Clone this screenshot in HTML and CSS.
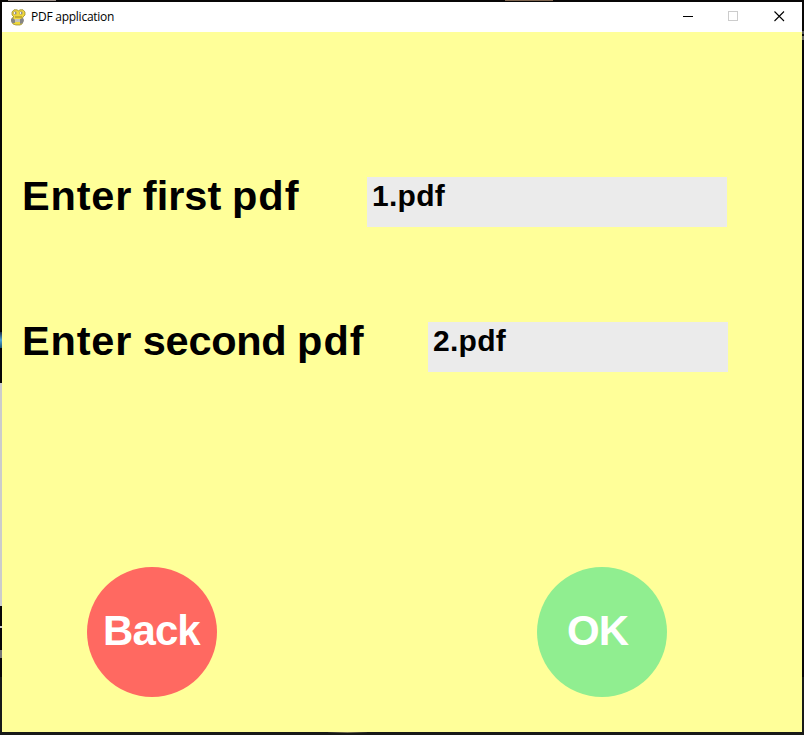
FILE: index.html
```html
<!DOCTYPE html>
<html lang="en">
<head>
<meta charset="utf-8">
<title>PDF application</title>
<link rel="stylesheet" href="styles.css">
</head>
<body>
<div class="desktop">
  <i class="sliver top-a"></i><i class="sliver top-b"></i>
  <i class="sliver blue"></i><i class="sliver pale"></i><i class="sliver dash"></i><i class="sliver gray"></i>
  <i class="sliver mark-a"></i><i class="sliver mark-b"></i><i class="sliver glow"></i>
  <main class="window">
    <header class="titlebar">
      <svg class="logo" width="16" height="17" viewBox="0 0 16 17">
        <path d="M4 .8h3l1.500 1 1.500-1h3L15 3v3l-2 2-1 2 1 2-1 3-2 1H6l-3-1-1-2V9l2-1-2-2V3z" fill="#efd83c" stroke="#8f8024" stroke-width=".7"/>
        <path d="M1 10l2-1 2 2v3H2l-1-2zM10 10l3-1 1 2-1 3-3 1z" fill="#858585"/>
        <path d="M5 10h5v3H5z" fill="#c4c4bb"/>
        <circle cx="5" cy="4" r="1.700" fill="#eee" stroke="#a58c20" stroke-width=".5"/>
        <circle cx="11" cy="4" r="1.700" fill="#eee" stroke="#a58c20" stroke-width=".5"/>
        <path d="M5 3.500h1v1H5zM11 3.500h1v1h-1z" fill="#333"/>
        <path d="M5 8h7" stroke="#84701c" stroke-width=".8"/>
      </svg>
      <span class="title">PDF application</span>
      <svg class="controls" width="120" height="30" viewBox="0 0 120 30" shape-rendering="crispEdges">
        <path d="M1 14h10v1H1z" fill="#000"/>
        <path d="M46.500 9.500h9v9h-9z" fill="none" stroke="#ccc"/>
        <path d="M92.500 9.500l9.500 9.500M102 9.500l-9.500 9.500" fill="none" stroke="#000" stroke-width="1.100" shape-rendering="auto"/>
      </svg>
    </header>
    <section class="canvas">
      <div class="row first">
        <label class="label"><span class="enter">Enter</span> <span class="mid-first">first</span> <span class="pdf">pdf</span></label>
        <div class="field">1.pdf</div>
      </div>
      <div class="row second">
        <label class="label"><span class="enter">Enter</span> <span class="mid-second">second</span> <span class="pdf">pdf</span></label>
        <div class="field">2.pdf</div>
      </div>
      <div class="actions">
        <button class="round back">Back</button>
        <button class="round ok">OK</button>
      </div>
    </section>
  </main>
</div>
</body>
</html>
```
FILE: styles.css
```css
* { box-sizing: border-box; }
body { margin: 0; background: #060505; }
.desktop { position: relative; width: 804px; height: 735px; padding: 2px; overflow: hidden;
  background: linear-gradient(#080606 0 677px, #181a18 677px); }
.window { position: relative; width: 800px; height: 730px; background: #ffff99; }
.titlebar { display: flex; align-items: center; height: 30px; padding-left: 8px; background: #fff; }
.logo { flex: none; }
.title { margin-left: 5px; font: 12px/30px "Open Sans", "Noto Sans", sans-serif; letter-spacing: -.25px; color: #000; white-space: nowrap; }
.controls { margin-left: auto; }
.canvas { height: 700px; padding-top: 145px; background: #ffff99; font-family: "Liberation Sans", Arial, sans-serif; font-weight: 700; font-kerning: none; font-variant-ligatures: none; }
.row { display: flex; justify-content: space-between; height: 50px; padding: 0 75px 0 20px; color: #000; }
.second { margin-top: 95px; padding-right: 74px; }
.label { font-size: 41.5px; line-height: 38px; white-space: nowrap; word-spacing: -.8px; }
.enter { letter-spacing: .8px; }
.mid-first { letter-spacing: 0; }
.mid-second { letter-spacing: -.3px; }
.pdf { letter-spacing: 1px; }
.field { width: 360px; padding-left: 5px; background: #ebebeb; font-size: 30px; line-height: 38px; letter-spacing: .3px; }
.second .field { width: 300px; }
.actions { display: flex; justify-content: space-between; margin-top: 195px; padding: 0 135px 0 85px; }
.round { width: 130px; height: 130px; padding: 0 0 3px; border: 0; border-radius: 50%; color: #fff; font: inherit; font-size: 42px; line-height: 127px; text-align: left; }
.back { padding-left: 16px; background: #ff6961; letter-spacing: -.9px; }
.ok { padding-left: 30px; background: #90ee90; letter-spacing: -1px; }
.sliver { position: absolute; }
.top-a { left: 8px; top: 0; width: 48px; height: 1px; background: #9b8e87; }
.top-b { left: 505px; top: 0; width: 48px; height: 1px; background: #806650; }
.blue { left: 0; top: 332px; width: 2px; height: 16px; background: linear-gradient(#1a2940, #4fa6d8, #1a5270); }
.pale { left: 0; top: 383px; width: 2px; height: 223px; background: #ccc; }
.dash { left: 0; top: 626px; width: 2px; height: 2px; background: #ccc; }
.gray { left: 0; top: 650px; width: 2px; height: 8px; background: #777; }
.mark-a { right: 0; top: 31px; width: 2px; height: 3px; background: #555; }
.mark-b { right: 0; top: 36px; width: 2px; height: 4px; background: #666; }
.glow { left: 328px; top: 732px; width: 39px; height: 1px; background: linear-gradient(90deg, #222, #777055, #222); }
```
